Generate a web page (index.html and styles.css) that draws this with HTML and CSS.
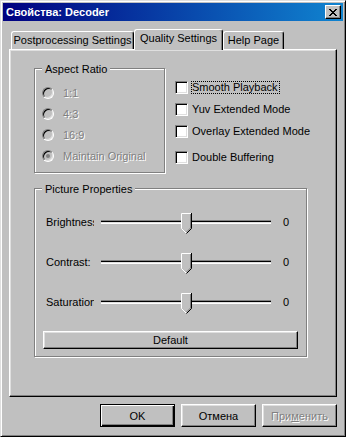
FILE: index.html
```html
<!DOCTYPE html>
<html lang="ru">
<head>
    <meta charset="UTF-8">
    <meta name="viewport" content="width=device-width, initial-scale=1.0">
    <title>Свойства: Decoder</title>
    <link rel="stylesheet" href="styles.css">
</head>
<body>
    <div class="window">
        <div class="title-bar">
            <span class="title">Свойства: Decoder</span>
            <button class="close-btn" aria-label="Close">
                <svg width="8" height="7" viewBox="0 0 8 7" shape-rendering="crispEdges"><path d="M0 0h2v1H0z M6 0h2v1H6z M1 1h2v1H1z M5 1h2v1H5z M2 2h4v1H2z M3 3h2v1H3z M2 4h4v1H2z M1 5h2v1H1z M5 5h2v1H5z M0 6h2v1H0z M6 6h2v1H6z" fill="#000"/></svg>
            </button>
        </div>
        <div class="dialog">
            <div class="tabs">
                <div class="tab tab-post">Postprocessing Settings</div>
                <div class="tab tab-quality active">Quality Settings</div>
                <div class="tab tab-help">Help Page</div>
            </div>
            <div class="panel">
                <div class="top-row">
                    <div class="group aspect">
                        <div class="group-title">Aspect Ratio</div>
                        <div class="radios">
                            <div class="radio"><span class="radio-box"></span>1:1</div>
                            <div class="radio"><span class="radio-box"></span>4:3</div>
                            <div class="radio"><span class="radio-box"></span>16:9</div>
                            <div class="radio"><span class="radio-box checked"></span>Maintain Original</div>
                        </div>
                    </div>
                    <div class="checks">
                        <div class="check"><span class="check-box"></span><span class="check-label focused">Smooth Playback</span></div>
                        <div class="check"><span class="check-box"></span><span class="check-label">Yuv Extended Mode</span></div>
                        <div class="check"><span class="check-box"></span><span class="check-label">Overlay Extended Mode</span></div>
                        <div class="check last"><span class="check-box"></span><span class="check-label">Double Buffering</span></div>
                    </div>
                </div>
                <div class="group picture">
                    <div class="group-title">Picture Properties</div>
                    <div class="sliders">
                        <div class="slider-row">
                            <span class="slider-label">Brightness:</span>
                            <div class="slider">
                                <div class="track"></div>
                                <svg class="thumb" width="11" height="21" viewBox="0 0 11 21">
                                    <polygon points="0,0 11,0 11,15 5.5,20.5 0,15" fill="#c0c0c0"/>
                                    <path d="M0.5 15.5V0.5H10" stroke="#fff" fill="none"/>
                                    <path d="M0.5 15.5L5 20" stroke="#fff" fill="none"/>
                                    <path d="M10.5 0V15.5L5.5 20.5" stroke="#000" fill="none"/>
                                    <path d="M9.5 1V15L5.5 19" stroke="#808080" fill="none"/>
                                </svg>
                            </div>
                            <span class="slider-value">0</span>
                        </div>
                        <div class="slider-row">
                            <span class="slider-label">Contrast:</span>
                            <div class="slider">
                                <div class="track"></div>
                                <svg class="thumb" width="11" height="21" viewBox="0 0 11 21">
                                    <polygon points="0,0 11,0 11,15 5.5,20.5 0,15" fill="#c0c0c0"/>
                                    <path d="M0.5 15.5V0.5H10" stroke="#fff" fill="none"/>
                                    <path d="M0.5 15.5L5 20" stroke="#fff" fill="none"/>
                                    <path d="M10.5 0V15.5L5.5 20.5" stroke="#000" fill="none"/>
                                    <path d="M9.5 1V15L5.5 19" stroke="#808080" fill="none"/>
                                </svg>
                            </div>
                            <span class="slider-value">0</span>
                        </div>
                        <div class="slider-row">
                            <span class="slider-label">Saturation:</span>
                            <div class="slider">
                                <div class="track"></div>
                                <svg class="thumb" width="11" height="21" viewBox="0 0 11 21">
                                    <polygon points="0,0 11,0 11,15 5.5,20.5 0,15" fill="#c0c0c0"/>
                                    <path d="M0.5 15.5V0.5H10" stroke="#fff" fill="none"/>
                                    <path d="M0.5 15.5L5 20" stroke="#fff" fill="none"/>
                                    <path d="M10.5 0V15.5L5.5 20.5" stroke="#000" fill="none"/>
                                    <path d="M9.5 1V15L5.5 19" stroke="#808080" fill="none"/>
                                </svg>
                            </div>
                            <span class="slider-value">0</span>
                        </div>
                    </div>
                    <button class="btn btn-wide">Default</button>
                </div>
            </div>
            <div class="buttons">
                <button class="btn btn-default">OK</button>
                <button class="btn">Отмена</button>
                <button class="btn disabled">При<u>м</u>енить</button>
            </div>
        </div>
    </div>
</body>
</html>
```

FILE: styles.css
```css
body {
    margin: 0;
    padding: 0;
    background-color: #c0c0c0;
    font-family: "Liberation Sans", Arial, sans-serif;
    font-size: 11px;
    color: #000;
}

.window {
    box-sizing: border-box;
    width: 346px;
    height: 437px;
    padding: 2px;
    background-color: #c0c0c0;
    border: 1px solid;
    border-color: #dfdfdf #000 #000 #dfdfdf;
    box-shadow: inset 1px 1px #fff, inset -1px -1px #808080;
}

/* caption */
.title-bar {
    height: 18px;
    display: flex;
    align-items: center;
    justify-content: space-between;
    background: linear-gradient(to right, #000080, #1084d0);
}

.title {
    color: #fff;
    font-weight: bold;
    padding-left: 3px;
}

.close-btn {
    box-sizing: border-box;
    width: 16px;
    height: 14px;
    margin-right: 2px;
    padding: 0;
    display: flex;
    align-items: center;
    justify-content: center;
    background-color: #c0c0c0;
    border: 1px solid;
    border-color: #fff #000 #000 #fff;
    box-shadow: inset -1px -1px #808080;
}

.dialog {
    padding: 8px 6px 0 6px;
}

/* tabs */
.tabs {
    display: flex;
    align-items: flex-start;
    height: 20px;
    padding-left: 2px;
}

.tab {
    box-sizing: border-box;
    height: 18px;
    margin-top: 2px;
    line-height: 17px;
    text-align: center;
    white-space: nowrap;
    background-color: #c0c0c0;
    border-top: 1px solid #fff;
    border-left: 1px solid #fff;
    border-right: 1px solid #000;
    border-radius: 3px 3px 0 0;
    box-shadow: inset -1px 0 #808080;
}

.tab-post {
    width: 123px;
}

.tab-quality {
    width: 89px;
}

.tab-help {
    width: 61px;
}

.tab.active {
    position: relative;
    z-index: 1;
    height: 21px;
    margin-top: 0;
}

/* property page */
.panel {
    box-sizing: border-box;
    height: 348px;
    padding: 18px 0 0 24px;
    border: 1px solid;
    border-color: #fff #000 #000 #fff;
    box-shadow: inset -1px -1px #808080, inset 1px 1px #dfdfdf;
}

.top-row {
    display: flex;
    align-items: flex-start;
}

.group {
    box-sizing: border-box;
    border: 1px solid #808080;
    box-shadow: 1px 1px #fff, inset 1px 1px #fff;
}

.group-title {
    display: table;
    margin: -6px 0 0 7px;
    padding: 0 3px;
    line-height: 13px;
    background-color: #c0c0c0;
}

.aspect {
    width: 131px;
    height: 105px;
}

.radios {
    display: flex;
    flex-direction: column;
    gap: 9px;
    padding: 11px 0 0 7px;
}

.radio {
    display: flex;
    align-items: center;
    height: 12px;
    color: #808080;
    text-shadow: 1px 1px #fff;
}

.radio-box {
    box-sizing: border-box;
    width: 12px;
    height: 12px;
    margin-right: 9px;
    display: flex;
    align-items: center;
    justify-content: center;
    border-radius: 50%;
    border: 1px solid;
    border-color: #808080 #fff #fff #808080;
    box-shadow: inset 1px 1px #000, inset -1px -1px #dfdfdf;
    background-color: #c0c0c0;
}

.radio-box.checked::after {
    content: "";
    width: 4px;
    height: 4px;
    border-radius: 50%;
    background-color: #808080;
}

.checks {
    display: flex;
    flex-direction: column;
    gap: 9px;
    margin: 13px 0 0 10px;
}

.check {
    display: flex;
    align-items: center;
    height: 13px;
}

.check.last {
    margin-top: 4px;
}

.check-box {
    box-sizing: border-box;
    width: 13px;
    height: 13px;
    margin-right: 3px;
    background-color: #fff;
    border: 1px solid;
    border-color: #808080 #fff #fff #808080;
    box-shadow: inset 1px 1px #000, inset -1px -1px #dfdfdf;
}

.check-label {
    padding: 0 1px 0 0;
    line-height: 11px;
    border: 1px dotted transparent;
    white-space: nowrap;
}

.check-label.focused {
    border-color: #000;
}

/* picture properties */
.picture {
    width: 273px;
    height: 169px;
    margin-top: 15px;
}

.sliders {
    display: flex;
    flex-direction: column;
    gap: 19px;
    padding: 17px 0 0 11px;
}

.slider-row {
    display: flex;
    align-items: center;
    height: 21px;
}

.slider-label {
    width: 48px;
    margin: 0 7px 4px 0;
    overflow: hidden;
    white-space: nowrap;
}

.slider-value {
    margin: 0 0 4px 12px;
}

.slider {
    width: 170px;
    height: 21px;
    display: grid;
}

.track {
    grid-area: 1 / 1;
    box-sizing: border-box;
    height: 4px;
    margin-top: 7px;
    border-top: 1px solid #808080;
    border-bottom: 1px solid #fff;
    box-shadow: inset 0 1px #000, inset 0 -1px #dfdfdf;
}

.thumb {
    grid-area: 1 / 1;
    justify-self: center;
}

/* buttons */
.btn {
    box-sizing: border-box;
    padding: 0;
    font-family: "Liberation Sans", Arial, sans-serif;
    font-size: 11px;
    color: #000;
    background-color: #c0c0c0;
    border: 1px solid;
    border-color: #fff #000 #000 #fff;
    box-shadow: inset -1px -1px #808080, inset 1px 1px #dfdfdf;
}

.btn-wide {
    display: block;
    width: 255px;
    height: 18px;
    margin: 17px 0 0 8px;
}

.buttons {
    display: flex;
    justify-content: flex-end;
    gap: 6px;
    margin-top: 7px;
}

.buttons .btn {
    width: 75px;
    height: 23px;
}

.buttons .btn-default {
    border-color: #000;
    box-shadow: inset 1px 1px #fff, inset -1px -1px #000, inset -2px -2px #808080;
}

.btn.disabled {
    color: #808080;
    text-shadow: 1px 1px #fff;
}
```
